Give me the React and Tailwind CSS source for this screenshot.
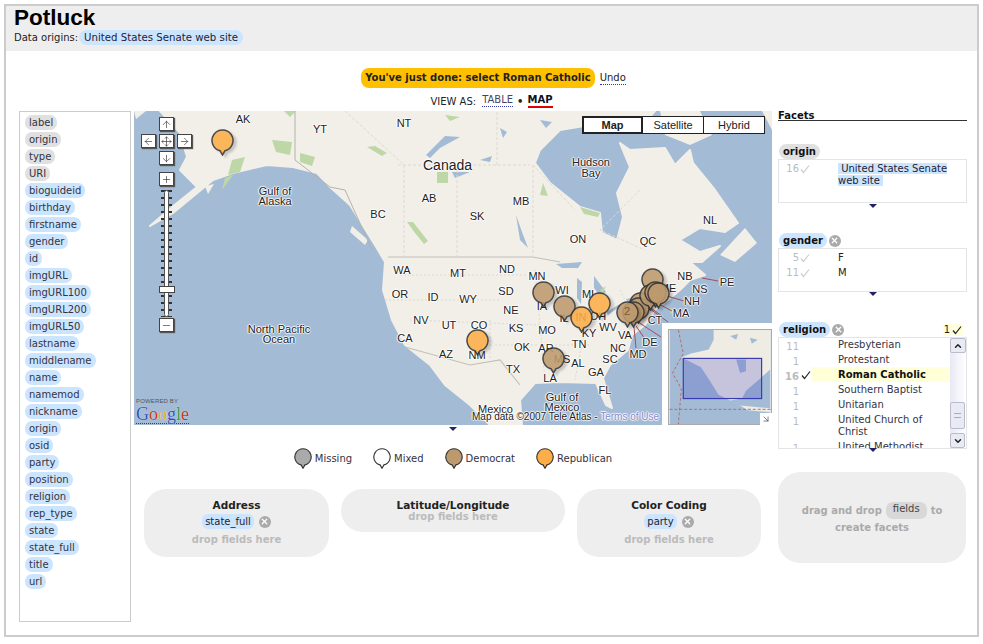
import React from 'react';
import { ArrowDown, ArrowLeft, ArrowRight, ArrowUp, ChevronDown, ChevronUp, Minus, Move, Plus, X } from 'lucide-react';

const fields = [
  ['label', 1], ['origin', 1], ['type', 1], ['URI', 1], ['bioguideid'], ['birthday'], ['firstname'], ['gender'], ['id'],
  ['imgURL'], ['imgURL100'], ['imgURL200'], ['imgURL50'], ['lastname'], ['middlename'], ['name'], ['namemod'],
  ['nickname'], ['origin'], ['osid'], ['party'], ['position'], ['religion'], ['rep_type'], ['state'], ['state_full'],
  ['title'], ['url'],
];

const labels = [
  ['AK', 243, 119], ['YT', 320, 129], ['NT', 404, 123], ['BC', 378, 214], ['AB', 429, 198], ['SK', 477, 216], ['MB', 521, 201],
  ['ON', 578, 239], ['QC', 648, 241], ['NL', 710, 220], ['NB', 685, 276], ['NS', 700, 289], ['PE', 727, 282], ['NH', 692, 301],
  ['MA', 681, 313], ['WA', 402, 270], ['MT', 458, 273], ['ND', 507, 269], ['OR', 400, 294], ['ID', 433, 297], ['WY', 468, 299],
  ['SD', 506, 291], ['MN', 537, 276], ['WI', 562, 290], ['MI', 588, 294], ['ME', 668, 288], ['NE', 511, 310], ['IA', 542, 306],
  ['IL', 564, 318], ['IN', 581, 317], ['OH', 598, 316], ['NV', 421, 320], ['UT', 449, 325], ['CO', 479, 325], ['KS', 516, 328], ['MO', 547, 330],
  ['KY', 589, 333], ['WV', 608, 327], ['VA', 625, 335], ['CT', 655, 320], ['CA', 405, 338], ['AZ', 446, 354], ['NM', 477, 355],
  ['OK', 522, 347], ['AR', 546, 348], ['TN', 579, 344], ['NC', 618, 348], ['DE', 650, 342], ['MD', 638, 354], ['TX', 513, 369],
  ['MS', 562, 359], ['AL', 578, 363], ['SC', 610, 359], ['GA', 596, 372], ['LA', 550, 378], ['FL', 605, 390],
];

const pins = [
  [222, 140, 'r'], [477, 340, 'r'], [543, 292, 'd'], [564, 306, 'd'], [553, 358, 'd'], [581, 317, 'r'], [599, 303, 'r'],
  [652, 279, 'd'], [640, 303, 'd'], [638, 308, 'd'], [633, 312, 'd'], [627, 312, 'd'], [650, 295, 'd'], [655, 292, 'd'], [658, 293, 'd'],
];

const redLines = [
  'M702 278L718 281', 'M667 296L684 301', 'M657 303L672 311', 'M650 309L668 322', 'M638 322L661 337', 'M636 326L645 339', 'M634 327L636 348',
  'M648 306L662 316',
];

const religions = [
  ['11', 'Presbyterian'], ['1', 'Protestant'], ['16', 'Roman Catholic', 1], ['1', 'Southern Baptist'], ['1', 'Unitarian'],
  ['1', 'United Church of Christ'], ['1', 'United Methodist'],
];

const halo = '[text-shadow:1px_0_1px_#fff,-1px_0_1px_#fff,0_1px_1px_#fff,0_-1px_1px_#fff]';

const Pin = ({ fill, className }) => (
  <svg viewBox="0 0 23 27" className={className}>
    <path d="M9 21.700A10.500 10.500 0 1 1 14 21.700L11.500 26Z" fill={fill} stroke="#333" strokeWidth="1.500" />
  </svg>
);

const RemoveDot = () => (
  <span className="flex h-[12px] w-[12px] items-center justify-center rounded-full bg-[#aaa]">
    <X className="h-[9px] w-[9px] text-white" strokeWidth={3.500} />
  </span>
);

const Check = ({ dark }) => (
  <svg viewBox="0 0 10 10" className="h-[10px] w-[10px]">
    <path d="M1 5.500L3.500 8.500L9 1.500" fill="none" stroke={dark ? '#222' : '#ccc'} strokeWidth="1.200" />
  </svg>
);

const NavBtn = ({ children, className }) => (
  <div className={`absolute flex h-[14px] w-[15px] items-center justify-center border border-[#444] bg-white shadow-[1px_1px_1px_#555] ${className}`}>
    {children}
  </div>
);

const BaseLand = () => (
  <svg viewBox="134 111 638 314" className="absolute inset-0 h-full w-full">
    <rect x="134" y="111" width="638" height="314" fill="#a3bbd5" />
    <path
      d="M160 111L655 111L640 128L600 125L590 125L560 130L540 150L535 163L550 183L580 207L600 213L602 233L617 240L623 217L617 193L630 167L620 143L630 150L665 148L675 165L690 150L693 163L715 190L738 223L725 232L700 228L680 240L700 252L720 246L702 262L690 262L705 275L690 280L680 290L668 300L655 310L645 325L632 335L628 350L610 365L603 378L612 408L606 405L596 383L560 382L535 383L520 400L522 425L490 425L470 405L445 385L430 365L405 345L392 320L383 290L385 262L375 245L350 205L330 187L317 173L293 167L267 165L233 173L213 180L173 213L150 226L172 207L197 187L180 170L187 157L180 133Z"
      fill="#f2efe9"
      stroke="#f2efe9"
      strokeLinejoin="round"
      strokeWidth="2"
    />
    <path d="M134 111L146 111L136 119Z M745 228L757 243L735 262L720 255Z M762 111L772 111L772 130ZM660 111L700 111L712 135L690 145L665 135ZM352 226L368 240L365 245L350 232ZM205 186L214 184L208 194Z" fill="#f2efe9" />
    <g fill="#a3bbd5">
      <path d="M426 155L445 136L460 137L440 148L430 158ZM452 172L470 172L455 178ZM516 215L522 232L528 248L520 240ZM556 264L582 262L578 268L562 268ZM577 278L582 282L581 304L577 298ZM594 276L606 292L600 296L594 288ZM606 312L620 304L619 307L608 315ZM626 299L638 297L636 301L628 302Z" />
      <path d="M500 128L507 132L503 138ZM480 160L492 156L490 162ZM540 120L552 122L546 128ZM598 140L612 134L606 144Z" />
    </g>
    <g fill="#bdd7a6">
      <path d="M367 147L375 146L387 153L382 156ZM437 172L448 172L448 183L437 183ZM407 222L413 222L428 241L424 244L415 233ZM543 183L548 196L540 195ZM580 207L600 213L598 217L584 214Z" />
      <path d="M232 160L245 157L240 172L228 175ZM272 140L292 142L290 155L276 152ZM300 153L315 157L312 166L300 162ZM225 178L233 175L222 190ZM283 110L296 111L290 117ZM445 115L460 117L450 121ZM670 307L676 312L670 314ZM600 290L606 286L602 294Z" />
    </g>
    <g fill="none" stroke="#dcd9d0" strokeWidth="1">
      <path d="M388 257L533 257L560 262M405 347L470 365L500 360L520 385" stroke="#c4c0b7" strokeWidth="1.200" />
      <path d="M295 111L295 160L330 187L345 190L372 250" stroke="#b5b2aa" />
      <path d="M398 165L530 165M404 165L404 257M457 165L457 257M497 165L497 111M533 165L533 257M533 165L575 210M640 190L600 230L645 250M345 111L404 165" strokeDasharray="3 2" />
      <path d="M400 275L535 275M385 300L500 300M410 320L540 325M495 345L590 345M490 320L490 360M535 270L545 380M590 300L575 380M620 290L640 330" strokeDasharray="2 2" />
    </g>
    <g stroke="#a05060" strokeWidth="1" fill="none">
      {redLines.map((d) => (
        <path key={d} d={d} />
      ))}
    </g>
  </svg>
);

const MiniMap = () => (
  <svg viewBox="0 0 103 96" className="h-full w-full">
    <rect width="103" height="96" fill="#a3bbd5" />
    <path d="M45 0L103 0L103 40L92 50L78 62L74 70L62 72L50 66L40 50L32 38L20 32L12 28L22 24L40 20L45 10Z M72 77L103 80L103 84L80 82Z" fill="#efece3" />
    <path d="M68 30L78 30L78 42L72 44Z M62 6L70 4L68 10Z M82 8L90 10L84 14Z" fill="#a3bbd5" />
    <path d="M9 0L14 24L3 44L12 60L9 96" stroke="#b56a70" fill="none" strokeDasharray="3 2" />
    <path d="M0 81L103 81" stroke="#b56a70" fill="none" strokeDasharray="3 2" />
    <rect x="14" y="29" width="80" height="41" fill="#4a4ac8" fillOpacity="0.250" stroke="#3a3ab0" strokeWidth="1.200" />
  </svg>
);

const MapPanel = () => (
  <div className="relative h-[314px] w-[638px] overflow-hidden font-['Liberation_Sans',sans-serif]">
    <BaseLand />

    {labels.map(([text, x, y]) => (
      <span
        key={text + x}
        className={`absolute -translate-x-1/2 -translate-y-1/2 text-[11px] leading-none text-[#222] ${halo}`}
        style={{ left: x - 134, top: y - 111 }}
      >
        {text}
      </span>
    ))}
    <span className={`absolute left-[289px] top-[47px] text-[14px] leading-none text-[#222] ${halo}`}>Canada</span>
    <span className={`absolute left-[432px] top-[46px] w-[50px] text-center text-[11px] leading-[11px] text-[#222] ${halo}`}>Hudson Bay</span>
    <span className={`absolute left-[116px] top-[75px] w-[50px] text-center text-[11px] leading-[10px] text-[#222] ${halo}`}>Gulf of Alaska</span>
    <span className={`absolute left-[108px] top-[213px] w-[74px] text-center text-[11px] leading-[10px] text-[#222] ${halo}`}>North Pacific Ocean</span>
    <span className={`absolute left-[403px] top-[281px] w-[50px] text-center text-[11px] leading-[10px] text-[#222] ${halo}`}>Gulf of Mexico</span>
    <span className={`absolute left-[344px] top-[293px] text-[11px] leading-none text-[#222] ${halo}`}>Mexico</span>

    {pins.map(([x, y, party], i) => (
      <div key={i} className="absolute h-[27px] w-[23px] opacity-[0.88] drop-shadow-[3px_2px_1px_rgba(0,0,0,0.2)]" style={{ left: x - 134 - 11, top: y - 111 - 11 }}>
        <Pin fill={party === 'r' ? '#fdae48' : '#bd9a6e'} className="h-[27px] w-[23px]" />
      </div>
    ))}
    <span className="absolute left-[490px] top-[195px] text-[11px] leading-none text-[#7a5a30]">2</span>

    <NavBtn className="left-[25px] top-[6px]"><ArrowUp className="h-[11px] w-[11px]" strokeWidth={1.300} /></NavBtn>
    <NavBtn className="left-[7px] top-[23px]"><ArrowLeft className="h-[11px] w-[11px]" strokeWidth={1.300} /></NavBtn>
    <NavBtn className="left-[25px] top-[23px]"><Move className="h-[11px] w-[11px]" strokeWidth={1.300} /></NavBtn>
    <NavBtn className="left-[43px] top-[23px]"><ArrowRight className="h-[11px] w-[11px]" strokeWidth={1.300} /></NavBtn>
    <NavBtn className="left-[25px] top-[40px]"><ArrowDown className="h-[11px] w-[11px]" strokeWidth={1.300} /></NavBtn>
    <NavBtn className="left-[25px] top-[61px]"><Plus className="h-[11px] w-[11px]" strokeWidth={1.300} /></NavBtn>
    <div className="absolute left-[27px] top-[79px] h-[127px] w-[11px] bg-[repeating-linear-gradient(#333_0,#333_2px,transparent_2px,transparent_7px)]" />
    <div className="absolute left-[30px] top-[79px] h-[127px] w-[5px] rounded-full border border-[#555] bg-white" />
    <div className="absolute left-[25px] top-[175px] h-[7px] w-[16px] border border-[#444] bg-white" />
    <NavBtn className="left-[25px] top-[207px]"><Minus className="h-[11px] w-[11px]" strokeWidth={1.300} /></NavBtn>

    <div className="absolute left-[448px] top-[5px] flex h-[18px] text-[11px] text-[#222]">
      <div className="flex w-[61px] items-center justify-center border-2 border-[#222] bg-white font-bold">Map</div>
      <div className="flex w-[61px] items-center justify-center border-y border-r border-[#222] bg-white">Satellite</div>
      <div className="flex w-[61px] items-center justify-center border-y border-r border-[#222] bg-white">Hybrid</div>
    </div>

    <div className="absolute bottom-[1px] left-[2px]">
      <div className="text-[6px] leading-[7px] tracking-wide text-[#555]">POWERED BY</div>
      <div className="border-b border-dotted border-[#3333aa] font-['Liberation_Serif',serif] text-[18px] leading-[18px] [text-shadow:0_0_1px_#fff]">
        <span className="text-[#2a55b8]">G</span>
        <span className="text-[#c8321e]">o</span>
        <span className="text-[#e0a81c]">o</span>
        <span className="text-[#2a55b8]">g</span>
        <span className="text-[#3f9a3a]">l</span>
        <span className="text-[#c8321e]">e</span>
      </div>
    </div>
    <div className={`absolute left-[338px] top-[301px] whitespace-nowrap text-[10px] leading-none text-[#222] ${halo}`}>
      Map data ©2007 Tele Atlas - <span className="text-[#8a8ad0]">Terms of Use</span>
    </div>

    <div className="absolute left-[528px] top-[212px] h-[102px] w-[110px] bg-white pl-[6px] pt-[6px]">
      <div className="h-[96px] w-[104px] border border-[#aaa]">
        <MiniMap />
      </div>
      <div className="absolute bottom-0 right-0 flex h-[12px] w-[12px] items-center justify-center bg-white">
        <ArrowDown className="h-[10px] w-[10px] -rotate-45 text-[#444]" strokeWidth={1.500} />
      </div>
    </div>
  </div>
);

const LegendItem = ({ fill, label }) => (
  <div className="flex items-center gap-[3px]">
    <Pin fill={fill} className="h-[21px] w-[18px]" />
    <span className="text-[#334]">{label}</span>
  </div>
);

const Caret = () => <div className="mx-auto h-0 w-0 border-x-[4px] border-t-[4px] border-x-transparent border-t-[#222266]" />;

const FacetPill = ({ name, tone, removable }) => (
  <div className="flex items-center gap-[2px]">
    <span className={`rounded-[8px] px-[4px] text-[10px] font-bold leading-[15px] text-[#111] ${tone}`}>{name}</span>
    {removable && <RemoveDot />}
  </div>
);

const CountRow = ({ count, children }) => (
  <div className="flex py-[1.500px] text-[10px] leading-[12px]">
    <div className="flex h-[12px] w-[31px] items-center justify-end gap-px text-[#bbb]">
      {count}
      <Check />
    </div>
    <div className="ml-[28px] flex-1">{children}</div>
  </div>
);

const DropZone = ({ title, chip, className }) => (
  <div className={`rounded-[22px] bg-[#eee] pt-[10px] text-center text-[10.500px] leading-[12px] ${className}`}>
    <div className="font-bold text-[#222]">{title}</div>
    {chip && (
      <div className="mt-[3px] flex items-center justify-center gap-[5px] text-[10px]">
        <span className="rounded-[6px] bg-[#cce5ff] px-[3px] leading-[15px] text-[#223]">{chip}</span>
        <RemoveDot />
      </div>
    )}
    <div className={`text-[10px] font-bold text-[#bbb] ${chip ? 'mt-[5px]' : ''}`}>drop fields here</div>
  </div>
);

const App = () => {
  return (
    <div className="ml-[4px] mt-[4px] h-[633px] w-[975px] border-2 border-[#ccc] bg-white font-['DejaVu_Sans',sans-serif] text-[10px] text-[#222]">
      <header className="h-[45px] bg-[#eee] pl-[8px] pt-[1px]">
        <h1 className="font-['Liberation_Sans',sans-serif] text-[22.500px] font-bold leading-[22px] text-black">Potluck</h1>
        <div className="mt-[1px] flex items-center gap-px">
          <span>Data origins:</span>
          <span className="rounded-[8px] bg-[#cce5ff] px-[5px] text-[10.200px] leading-[15px] text-[#223]">United States Senate web site</span>
        </div>
      </header>

      <div className="mt-[17px] flex h-[20px] items-center justify-center gap-[5px] pl-[4px]">
        <span className="rounded-[8px] bg-[#ffc000] px-[4px] text-[10px] font-bold leading-[20px] text-[#222]">You've just done: select Roman Catholic</span>
        <span className="mt-[1px] border-b border-dotted border-[#3333aa] leading-[12px]">Undo</span>
      </div>
      <div className="mt-[5px] flex h-[18px] items-start justify-center gap-[4px] pt-[1px]">
        <span>VIEW AS:</span>
        <span className="ml-[2px] border-b border-dotted border-[#3333aa] leading-[12px] text-[#446]">TABLE</span>
        <span className="font-bold">•</span>
        <span className="border-b-2 border-[#e00000] font-bold leading-[12px] text-[#112]">MAP</span>
      </div>

      <div className="ml-[13px] flex">
        <aside className="flex h-[511px] w-[112px] flex-col items-start gap-[2px] border border-[#ccc] pl-[5px] pt-[3px]">
          {fields.map(([name, gray], i) => (
            <span key={i} className={`rounded-[7px] px-[4px] leading-[15px] text-[#334] ${gray ? 'bg-[#e0e0e0]' : 'bg-[#cce5ff]'}`}>
              {name}
            </span>
          ))}
        </aside>

        <main className="ml-[3px] w-[638px]">
          <MapPanel />
          <div className="pt-[2px]"><Caret /></div>
          <div className="mt-[17px] flex h-[21px] justify-center gap-[21px]">
            <LegendItem fill="#aaaaaa" label="Missing" />
            <LegendItem fill="#ffffff" label="Mixed" />
            <LegendItem fill="#bd9a6e" label="Democrat" />
            <LegendItem fill="#fdae48" label="Republican" />
          </div>
          <div className="ml-[10px] mt-[20px] flex items-start gap-[12px]">
            <DropZone title="Address" chip="state_full" className="h-[68px] w-[185px]" />
            <DropZone title="Latitude/Longitude" className="h-[43px] w-[224px]" />
            <DropZone title="Color Coding" chip="party" className="h-[68px] w-[184px]" />
          </div>
        </main>

        <aside className="ml-[6px] w-[189px]">
          <div className="border-b border-[#333] text-[10px] font-bold leading-[9px] text-[#111]">Facets</div>

          <div className="mt-[23px] pl-[1px]"><FacetPill name="origin" tone="bg-[#e0e0e0]" /></div>
          <div className="h-[44px] border border-[#e4e4e4] pt-[1px]">
            <CountRow count="16">
              <span className="box-decoration-clone bg-[#cce5ff] text-[#223]">&nbsp;United States Senate web site&nbsp;</span>
            </CountRow>
          </div>
          <div className="pt-[1px]"><Caret /></div>

          <div className="mt-[25px] pl-[1px]"><FacetPill name="gender" tone="bg-[#cce5ff]" removable /></div>
          <div className="h-[44px] border border-[#e4e4e4] pt-[1px]">
            <CountRow count="5">F</CountRow>
            <CountRow count="11">M</CountRow>
          </div>
          <div><Caret /></div>

          <div className="mt-[26px] flex items-center justify-between pl-[1px] pr-[4px]">
            <FacetPill name="religion" tone="bg-[#cce5ff]" removable />
            <span className="flex items-center gap-[2px] bg-[#ffffe0] px-[1px] leading-[12px]">1<Check dark /></span>
          </div>
          <div className="relative flex h-[112px] overflow-hidden border border-[#e4e4e4]">
            <div className="-mt-[1px] flex-1">
              {religions.map(([count, name, selected]) => (
                <div key={name} className={`flex py-[1.500px] leading-[12px] ${selected ? 'bg-[linear-gradient(90deg,#fff_32px,#ffffd8_32px)] font-bold text-[#111]' : 'text-[#334]'}`}>
                  <div className="flex h-[12px] w-[20px] translate-y-[2px] justify-end text-[#bbb]">{count}</div>
                  <div className="h-[12px] w-[12px] pl-[2px] pt-[1px]">{selected && <Check dark />}</div>
                  <div className="ml-[27px] flex-1">{name}</div>
                </div>
              ))}
            </div>
            <div className="relative w-[16px] bg-[linear-gradient(90deg,#e8e8f4,#fff)]">
              <div className="flex h-[15px] items-center justify-center rounded-[2px] border border-[#bbc] bg-[#e8eaf4]"><ChevronUp className="h-[10px] w-[10px]" strokeWidth={3.500} /></div>
              <div className="absolute left-0 top-[64px] flex h-[27px] w-[15px] items-center justify-center rounded-[2px] border border-[#bbc] bg-[#e8eaf4]">
                <div className="h-[5px] w-[7px] border-y border-[#aab]" />
              </div>
              <div className="absolute bottom-0 flex h-[15px] w-[15px] items-center justify-center rounded-[2px] border border-[#bbc] bg-[#e8eaf4]"><ChevronDown className="h-[10px] w-[10px]" strokeWidth={3.500} /></div>
            </div>
          </div>
          <div className="relative -mt-[1px]"><Caret /></div>

          <div className="mt-[20px] flex h-[91px] w-[188px] flex-wrap content-center justify-center rounded-[22px] bg-[#eee] px-[14px] pt-[3px] text-center text-[10px] font-bold leading-[17px] text-[#aaa]">
            <span>drag and drop</span>
            <span className="mx-[4px] rounded-[7px] bg-[#d8d8d8] px-[7px] font-normal leading-[14px] text-[#444]">fields</span>
            <span>to</span>
            <span>create facets</span>
          </div>
        </aside>
      </div>
    </div>
  );
};

export default App;
